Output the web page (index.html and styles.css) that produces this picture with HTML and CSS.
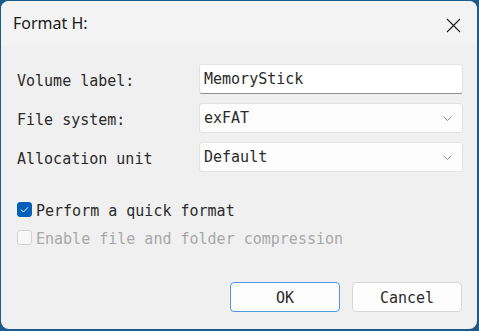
FILE: index.html
```html
<!DOCTYPE html>
<html>
<head>
    <meta charset="utf-8">
    <title>Format H:</title>
    <link rel="stylesheet" href="styles.css">
</head>
<body>
    <div class="window">
        <div class="titlebar">
            <span class="title">Format H:</span>
            <svg class="close" width="15" height="15" viewBox="0 0 15 15">
                <path d="M1 1 L14 14 M14 1 L1 14" stroke="#1b1b1b" stroke-width="1.1" fill="none"/>
            </svg>
        </div>

        <div class="form">
            <label class="label">Volume label:</label>
            <div class="field textbox">MemoryStick</div>

            <label class="label">File system:</label>
            <div class="field select">
                <span>exFAT</span>
                <svg width="9" height="5" viewBox="0 0 9 5"><path d="M0.5 0.5 L4.5 4.5 L8.5 0.5" stroke="#8a8a8a" fill="none"/></svg>
            </div>

            <label class="label">Allocation unit</label>
            <div class="field select">
                <span>Default</span>
                <svg width="9" height="5" viewBox="0 0 9 5"><path d="M0.5 0.5 L4.5 4.5 L8.5 0.5" stroke="#8a8a8a" fill="none"/></svg>
            </div>
        </div>

        <div class="checks">
            <div class="check">
                <span class="box checked">
                    <svg width="15" height="15" viewBox="0 0 15 15"><path d="M4 7.6 L6.4 10 L11 5.3" stroke="#fff" stroke-width="1" fill="none"/></svg>
                </span>
                <span>Perform a quick format</span>
            </div>
            <div class="check disabled">
                <span class="box"></span>
                <span>Enable file and folder compression</span>
            </div>
        </div>

        <div class="buttons">
            <button class="btn default">OK</button>
            <button class="btn">Cancel</button>
        </div>
    </div>
</body>
</html>
```

FILE: styles.css
```css
* {box-sizing:border-box;}
html,body {margin:0;height:331px;overflow:hidden;}
body {background:#1b5a8d;font-family:"DejaVu Sans Mono",monospace;font-size:15px;color:#2b2b2b;}

.window {margin:1px 2px 2px 1px;height:328px;background:#f0f0f0;border-radius:8px;display:flex;flex-direction:column;overflow:hidden;}

.titlebar {height:44px;flex:none;background:#f3f3f3;display:flex;align-items:center;justify-content:space-between;padding:0 16px 0 12px;}
.title {font-family:"Noto Sans",sans-serif;font-size:16px;color:#1a1a1a;}
.close {margin-top:4px;}

.form {display:grid;grid-template-columns:182px 1fr;row-gap:9px;padding:19px 14px 0 16px;align-items:center;}
.label {padding-top:3px;}
.field {height:30px;background:#fdfdfd;border:1px solid #e3e3e3;border-radius:3px;display:flex;align-items:center;justify-content:space-between;padding:0 10px 0 4px;}
.textbox {background:#fff;border-bottom-color:#8f8f8f;}
.select svg {margin-top:1px;}

.checks {padding:30px 0 0 16px;display:flex;flex-direction:column;gap:13px;}
.check {display:flex;align-items:center;gap:4px;height:15px;}
.box {width:15px;height:15px;border-radius:3px;border:1px solid #d4d4d4;background:#f7f7f7;display:block;}
.box.checked {background:#005fb8;border-color:#005fb8;}
.box.checked svg {display:block;margin:-1px;}
.check span:last-child {padding-top:3px;}
.disabled {color:#a8a8a8;}

.buttons {margin-top:auto;display:flex;justify-content:flex-end;gap:12px;padding:0 15px 17px 0;}
.btn {width:110px;height:30px;font-family:"DejaVu Sans Mono",monospace;font-size:15px;color:#2b2b2b;background:#fdfdfd;border:1px solid #d6d6d6;border-radius:4px;padding:2px 0 0;}
.btn.default {border-color:#4c9be0;}
```
